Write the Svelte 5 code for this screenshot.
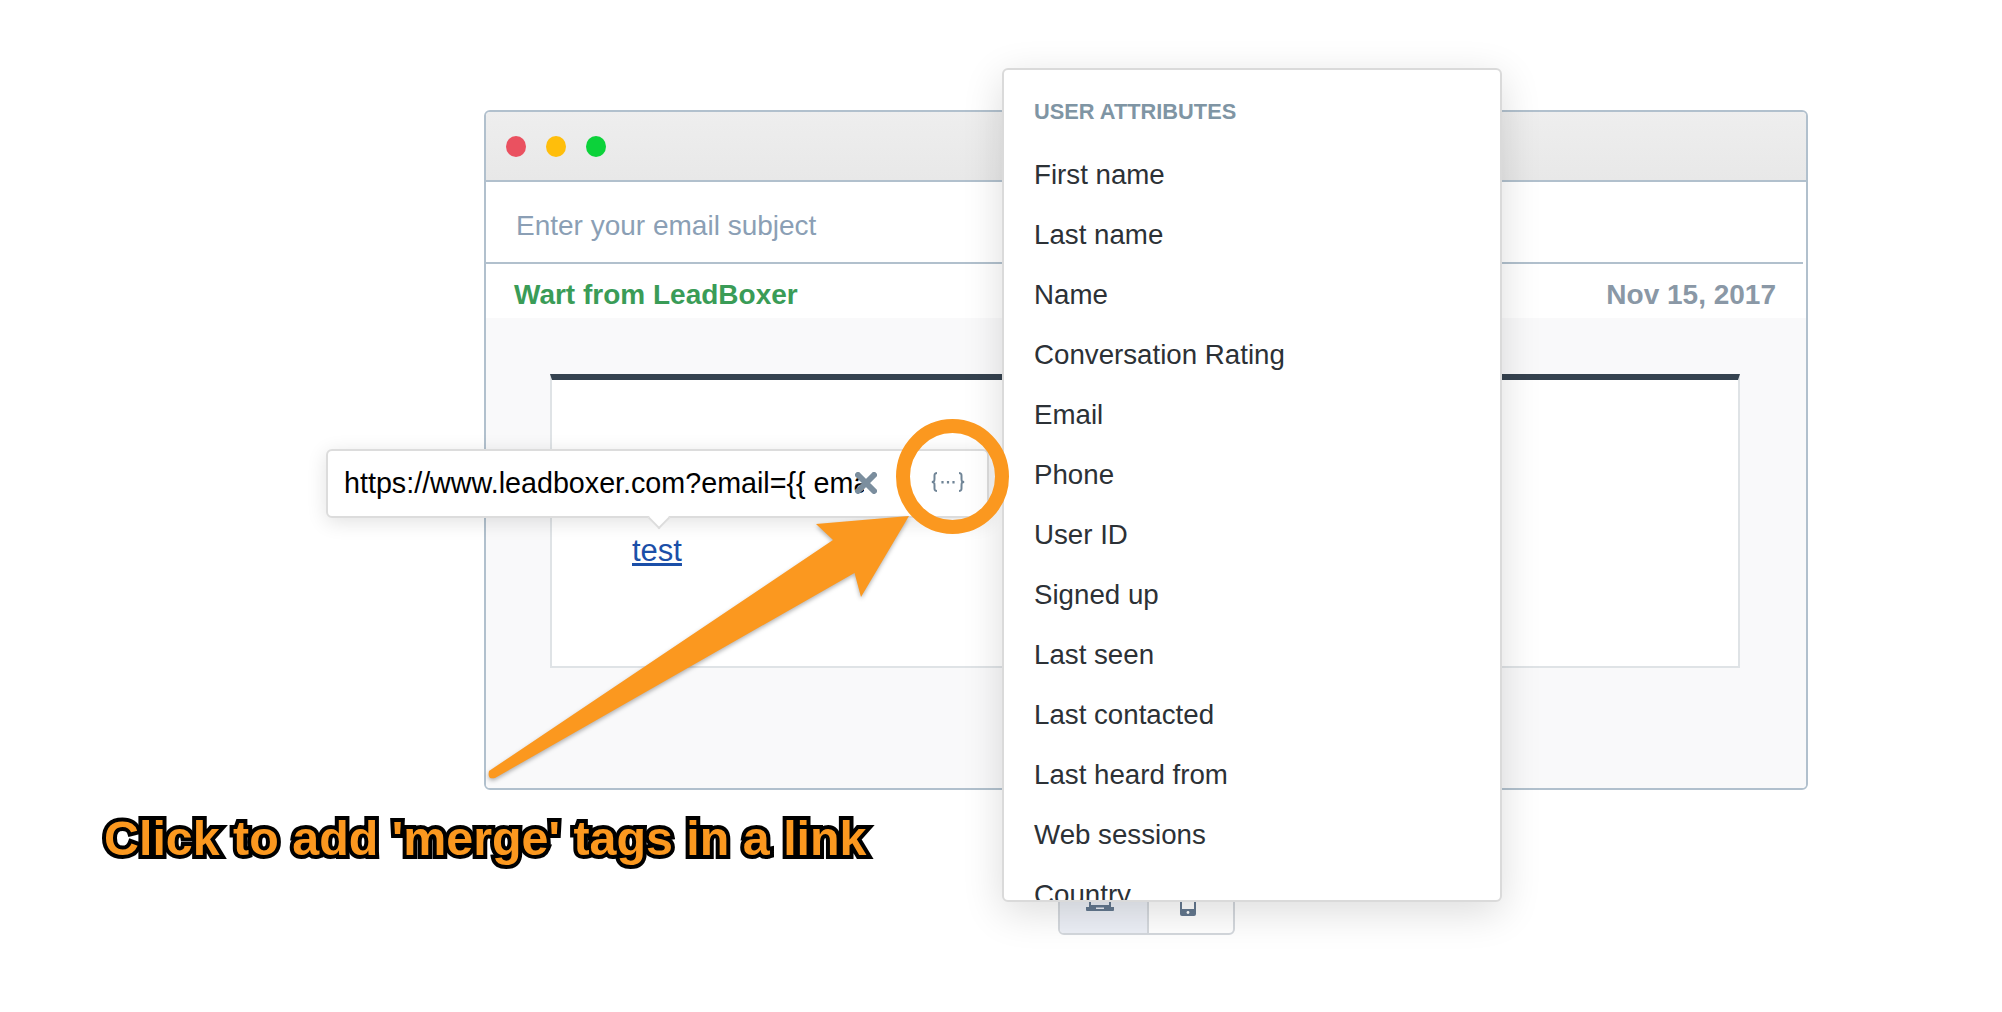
<script>
	const attributes = [
		'First name',
		'Last name',
		'Name',
		'Conversation Rating',
		'Email',
		'Phone',
		'User ID',
		'Signed up',
		'Last seen',
		'Last contacted',
		'Last heard from',
		'Web sessions',
		'Country'
	]
</script>

<div class="stage">
	<div class="window">
		<div class="titlebar">
			<span class="dot red"></span>
			<span class="dot yellow"></span>
			<span class="dot green"></span>
		</div>
		<div class="subject">Enter your email subject</div>
		<div class="sender">
			<span class="from">Wart from LeadBoxer</span>
			<span class="date">Nov 15, 2017</span>
		</div>
		<div class="body">
			<div class="card">
				<a class="link" href="#test">test</a>
			</div>
			<span class="ghost-tip"></span>
		</div>
	</div>

	<div class="devices">
		<div class="device active">
			<svg width="28" height="22" viewBox="0 0 28 22">
				<path d="M4 2h20v14H4z" fill="none" stroke="#64788f" stroke-width="2" />
				<path d="M0 17h28v3a1 1 0 0 1-1 1H1a1 1 0 0 1-1-1z" fill="#64788f" />
				<path d="M10 17.500h8v1.500h-8z" fill="#eceff6" />
			</svg>
		</div>
		<div class="device">
			<svg width="16" height="30" viewBox="0 0 16 30">
				<path d="M2 0h12a2 2 0 0 1 2 2v26a2 2 0 0 1-2 2H2a2 2 0 0 1-2-2V2a2 2 0 0 1 2-2z" fill="#64788f" />
				<path d="M2 4h12v19H2z" fill="#fff" />
				<circle cx="8" cy="26.500" r="1.400" fill="#fff" />
			</svg>
		</div>
	</div>

	<div class="popover">
		<div class="url">https://www.leadboxer.com?email=&#123;&#123; email &#125;&#125;</div>
		<svg class="clear" width="22" height="22" viewBox="0 0 22 22">
			<path d="M3 3l16 16M19 3L3 19" stroke="#7b8e9e" stroke-width="6" stroke-linecap="round" />
		</svg>
		<svg class="merge" width="34" height="20" viewBox="0 0 34 20" fill="none" stroke="#6f8496" stroke-width="2">
			<path d="M6 1C3 1 3.500 3 3.500 6S3.500 9.500 1 10c2.500.5 2.500 1 2.500 4s-.5 5 2.500 5" />
			<path d="M28 1c3 0 2.500 2 2.500 5s0 3.500 2.500 4c-2.500.5-2.500 1-2.500 4s.5 5-2.500 5" />
			<path d="M11.500 9v2.500M17 9v2.500M22.500 9v2.500" stroke-width="2.200" />
		</svg>
		<span class="tip"></span>
	</div>

	<div class="menu">
		<div class="menu-title">USER ATTRIBUTES</div>
		{#each attributes as item}
			<div class="menu-item">{item}</div>
		{/each}
	</div>

	<svg class="annotation" width="2002" height="1012" viewBox="0 0 2002 1012">
		<path
			class="arrow"
			d="M909 516 L861 597 L854.500 573 L495 778 Q487 780 489 771 L833 540 L816 524 Z"
		/>
		<ellipse cx="952.500" cy="476.500" rx="49.500" ry="50.500" fill="none" stroke="#fb981f" stroke-width="14" />
	</svg>

	<div class="caption">Click to add 'merge' tags in a link</div>
</div>

<style>
	:global(body) {
		background: #fff;
	}

	.stage {
		position: relative;
		width: 2002px;
		height: 1012px;
		padding: 110px 0 0 484px;
		box-sizing: border-box;
		overflow: hidden;
		font-family: 'Liberation Sans', Arial, sans-serif;
	}

	.window {
		width: 1324px;
		height: 680px;
		box-sizing: border-box;
		display: flex;
		flex-direction: column;
		border: 2px solid #b1c0cd;
		border-radius: 6px;
		background: #fff;
	}

	.titlebar {
		height: 68px;
		flex-shrink: 0;
		display: flex;
		align-items: center;
		gap: 20px;
		padding-left: 20px;
		border-bottom: 2px solid #b1c0cd;
		border-radius: 4px 4px 0 0;
		background: linear-gradient(#eeeeee, #e8e8e8);
	}

	.dot {
		width: 20px;
		height: 21px;
		border-radius: 50%;
	}

	.red {
		background: #ea5160;
	}

	.yellow {
		background: #ffbe0b;
	}

	.green {
		background: #0cd23a;
	}

	.subject {
		height: 73px;
		flex-shrink: 0;
		display: flex;
		align-items: center;
		margin-right: 3px;
		padding: 7px 0 0 30px;
		border-bottom: 2px solid #b1c0cd;
		font-size: 28px;
		color: #8b9fb5;
	}

	.sender {
		height: 54px;
		flex-shrink: 0;
		display: flex;
		align-items: center;
		justify-content: space-between;
		padding: 7px 30px 0 28px;
		box-sizing: border-box;
		font-size: 28px;
		font-weight: 700;
	}

	.from {
		color: #3a9c57;
	}

	.date {
		color: #8a98a6;
	}

	.body {
		position: relative;
		flex: 1;
		padding: 56px 66px 0 64px;
		background: #f9f9fa;
		border-radius: 0 0 4px 4px;
	}

	.card {
		height: 294px;
		box-sizing: border-box;
		padding-top: 153px;
		padding-left: 80px;
		background: #fff;
		border: 2px solid #dfe3e6;
		border-top: 6px solid #35424f;
		font-size: 31px;
	}

	.link {
		color: #1b4fa8;
	}

	.ghost-tip {
		position: absolute;
		left: 175px;
		top: 341px;
		width: 14px;
		height: 14px;
		background: #fff;
		border-right: 1px solid #dfe3e6;
		border-bottom: 1px solid #dfe3e6;
		transform: rotate(45deg);
	}

	.devices {
		display: flex;
		width: 177px;
		height: 62px;
		box-sizing: border-box;
		margin: 83px 0 0 574px;
		border: 2px solid #d4d8dd;
		border-radius: 6px;
		background: #fff;
	}

	.device {
		flex: 1;
		display: flex;
		justify-content: center;
		padding: 11px 6px 0 0;
	}

	.device.active {
		flex: 0 0 89px;
		box-sizing: border-box;
		padding: 15px 8px 0 0;
		background: #eceff6;
		border-right: 2px solid #d4d8dd;
		border-radius: 4px 0 0 4px;
	}

	.popover {
		position: absolute;
		left: 326px;
		top: 449px;
		width: 663px;
		height: 69px;
		box-sizing: border-box;
		border: 2px solid #dcdcdc;
		border-radius: 6px;
		background: #fff;
		box-shadow: 0 4px 20px rgba(0, 0, 0, 0.12);
	}

	.url {
		position: absolute;
		left: 16px;
		top: 0;
		width: 520px;
		height: 65px;
		line-height: 65px;
		font-size: 28.700px;
		color: #000;
		white-space: nowrap;
		overflow: hidden;
	}

	.clear {
		position: absolute;
		left: 527px;
		top: 21px;
	}

	.merge {
		position: absolute;
		left: 603px;
		top: 21px;
	}

	.tip {
		position: absolute;
		left: 323px;
		top: 59px;
		width: 14px;
		height: 14px;
		background: #fff;
		border-right: 2px solid #dcdcdc;
		border-bottom: 2px solid #dcdcdc;
		transform: rotate(45deg);
	}

	.menu {
		position: absolute;
		left: 1002px;
		top: 68px;
		width: 500px;
		height: 834px;
		box-sizing: border-box;
		padding: 26px 30px 0;
		border: 2px solid #dadada;
		border-radius: 6px;
		background: #fff;
		box-shadow: 0 10px 40px rgba(0, 0, 0, 0.14);
		overflow: hidden;
	}

	.menu-title {
		height: 49px;
		line-height: 32px;
		font-size: 21.800px;
		font-weight: 700;
		color: #7f95a4;
	}

	.menu-item {
		height: 60px;
		line-height: 60px;
		font-size: 27.700px;
		color: #2c3136;
	}

	.annotation {
		position: absolute;
		left: 0;
		top: 0;
	}

	.arrow {
		fill: #fb981f;
		filter: drop-shadow(0 2px 2px rgba(0, 0, 0, 0.3));
	}

	.caption {
		position: absolute;
		left: 104px;
		top: 809px;
		font-size: 48.400px;
		line-height: 58px;
		font-weight: 700;
		white-space: nowrap;
		color: #fb981f;
		-webkit-text-stroke: 8px #000;
		paint-order: stroke fill;
		text-shadow: 0 2px 3px rgba(0, 0, 0, 0.4);
	}
</style>
